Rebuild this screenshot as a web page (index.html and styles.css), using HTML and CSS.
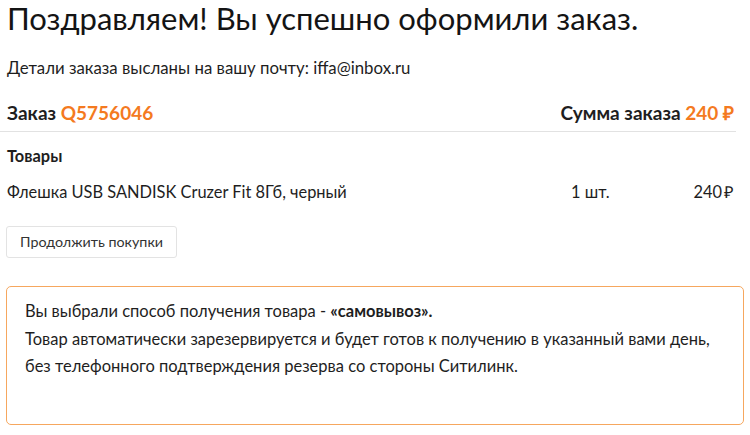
FILE: index.html
```html
<!DOCTYPE html>
<html lang="ru">
<head>
<meta charset="utf-8">
<title>Заказ оформлен</title>
<link rel="stylesheet" href="styles.css">
</head>
<body>
<div class="page">
  <div class="top">
    <h1 class="title">Поздравляем! Вы успешно оформили заказ.</h1>
    <p class="sub">Детали заказа высланы на вашу почту: iffa@inbox.ru</p>
    <div class="order">
      <div class="order-num">Заказ <span class="accent">Q5756046</span></div>
      <div class="order-sum">Сумма заказа <span class="accent">240 ₽</span></div>
    </div>
  </div>
  <div class="goods">
    <div class="goods-title">Товары</div>
    <div class="item">
      <div class="item-name">Флешка USB SANDISK Cruzer Fit 8Гб, черный</div>
      <div class="item-qty">1 шт.</div>
      <div class="item-price">240<span class="rub">₽</span></div>
    </div>
  </div>
  <button class="btn" type="button">Продолжить покупки</button>
  <div class="notice">
    <p class="notice-text">Вы выбрали способ получения товара - <b>«самовывоз».</b><br>Товар автоматически зарезервируется и будет готов к получению в указанный вами день,<br>без телефонного подтверждения резерва со стороны Ситилинк.</p>
  </div>
</div>
</body>
</html>
```
FILE: styles.css
```css
html, body {
  margin: 0;
  padding: 0;
  background: #fff;
}
body {
  font-family: Lato, "Open Sans", sans-serif;
  color: #1e1e1e;
}
.page {
  width: 750px;
  display: flex;
  flex-direction: column;
  align-items: flex-start;
}
.top {
  width: 736px;
  box-sizing: border-box;
  padding: 0 2px 0 7px;
  border-bottom: 1px solid #e2e2e2;
}
.title {
  margin: 0;
  font-size: 31px;
  font-weight: 400;
  line-height: 36px;
  color: #141414;
  white-space: nowrap;
}
.sub {
  margin: 20px 0 0;
  font-size: 16.8px;
  line-height: 24px;
  white-space: nowrap;
}
.order {
  margin-top: 20px;
  padding-bottom: 4.5px;
  display: flex;
  justify-content: space-between;
  font-size: 19px;
  font-weight: 700;
  line-height: 26px;
  white-space: nowrap;
}
.accent {
  color: #f47a1f;
}
.goods {
  width: 736px;
  box-sizing: border-box;
  padding: 0 2px 0 7px;
  font-size: 16.4px;
  line-height: 24px;
}
.goods-title {
  margin-top: 12.5px;
  font-weight: 700;
}
.item {
  margin-top: 12px;
  display: flex;
  white-space: nowrap;
}
.item-name {
  flex: 1;
}
.item-qty {
  width: 88px;
}
.item-price {
  width: 75px;
  text-align: right;
}
.rub {
  margin-left: 2px;
}
.btn {
  margin: 21.5px 0 0 6px;
  height: 32px;
  padding: 0 13px;
  background: #fff;
  border: 1px solid #e3e3e3;
  border-radius: 3px;
  font-family: Lato, "Open Sans", sans-serif;
  font-size: 14.3px;
  color: #333;
  line-height: 30px;
  white-space: nowrap;
}
.notice {
  margin: 28.5px 0 0 6px;
  width: 738px;
  height: 139px;
  box-sizing: border-box;
  border: 1px solid #f6a75e;
  border-radius: 5px;
  padding: 11px 0 0 18px;
}
.notice-text {
  margin: 0;
  font-size: 16.5px;
  line-height: 27.5px;
  white-space: nowrap;
  color: #1e1e1e;
}
.notice-text b {
  font-weight: 700;
}
```
